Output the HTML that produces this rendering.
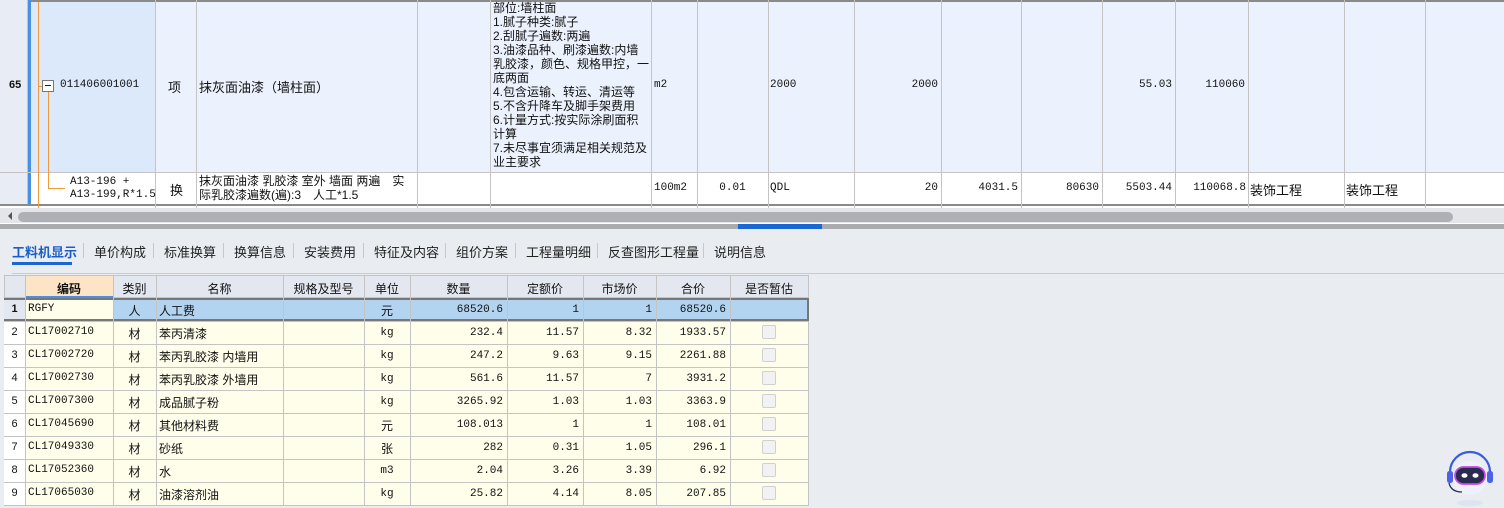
<!DOCTYPE html>
<html><head><meta charset="utf-8"><style>
*{margin:0;padding:0;box-sizing:border-box}
body{width:1504px;height:508px;overflow:hidden;background:#fff;font-family:"Liberation Sans","Noto Sans CJK SC",sans-serif;font-size:12px;color:#111;position:relative}
.a{position:absolute}
.m{font-family:"Liberation Mono","Noto Sans CJK SC",monospace;font-size:11px}
.ctr{text-align:center}
</style></head><body>
<div class="a" style="left:0;top:0;width:1504px;height:2px;background:#8a8a8a"></div>
<div class="a" style="left:0;top:0;width:28px;height:206px;background:#e8ecf5;border-right:1px solid #c4c4c4"></div>
<div class="a" style="left:28px;top:0;width:3px;height:206px;background:#4a90e2"></div>
<div class="a" style="left:31px;top:2px;width:1473px;height:170px;background:#ebf2fd"></div>
<div class="a" style="left:31px;top:2px;width:124px;height:170px;background:#dce9fb"></div>
<div class="a" style="left:0;top:172px;width:1504px;height:1px;background:#c4c4c4"></div>
<div class="a" style="left:31px;top:173px;width:1473px;height:31px;background:#fff"></div>
<div class="a" style="left:0;top:204px;width:1504px;height:2px;background:#8a8a8a"></div>
<div class="a" style="left:155px;top:0;width:1px;height:208px;background:#c4c4c4"></div>
<div class="a" style="left:196px;top:0;width:1px;height:208px;background:#c4c4c4"></div>
<div class="a" style="left:417px;top:0;width:1px;height:208px;background:#c4c4c4"></div>
<div class="a" style="left:490px;top:0;width:1px;height:208px;background:#c4c4c4"></div>
<div class="a" style="left:651px;top:0;width:1px;height:208px;background:#c4c4c4"></div>
<div class="a" style="left:697px;top:0;width:1px;height:208px;background:#c4c4c4"></div>
<div class="a" style="left:768px;top:0;width:1px;height:208px;background:#c4c4c4"></div>
<div class="a" style="left:854px;top:0;width:1px;height:208px;background:#c4c4c4"></div>
<div class="a" style="left:941px;top:0;width:1px;height:208px;background:#c4c4c4"></div>
<div class="a" style="left:1021px;top:0;width:1px;height:208px;background:#c4c4c4"></div>
<div class="a" style="left:1102px;top:0;width:1px;height:208px;background:#c4c4c4"></div>
<div class="a" style="left:1175px;top:0;width:1px;height:208px;background:#c4c4c4"></div>
<div class="a" style="left:1248px;top:0;width:1px;height:208px;background:#c4c4c4"></div>
<div class="a" style="left:1344px;top:0;width:1px;height:208px;background:#c4c4c4"></div>
<div class="a" style="left:1425px;top:0;width:1px;height:208px;background:#c4c4c4"></div>
<div class="a" style="left:38px;top:2px;width:1px;height:206px;background:#f39a3c"></div>
<div class="a" style="left:38px;top:86px;width:4px;height:1px;background:#f39a3c"></div>
<div class="a" style="left:48px;top:91px;width:1px;height:97px;background:#f39a3c"></div>
<div class="a" style="left:48px;top:188px;width:17px;height:1px;background:#f39a3c"></div>
<div class="a" style="left:42px;top:80px;width:12px;height:12px;border:1px solid #777;background:#fff"></div>
<div class="a" style="left:45px;top:85px;width:6px;height:1px;background:#222"></div>
<div class="a" style="left:9px;top:79px;font-weight:bold;font-size:11px">65</div>
<div class="a m" style="left:60px;top:79px">011406001001</div>
<div class="a" style="left:168px;top:77px;font-size:13px">项</div>
<div class="a" style="left:199px;top:77px;font-size:13px">抹灰面油漆（墙柱面）</div>
<div class="a" style="left:493px;top:1px;width:158px;font-size:12px;line-height:14px;white-space:nowrap">部位:墙柱面<br>1.腻子种类:腻子<br>2.刮腻子遍数:两遍<br>3.油漆品种、刷漆遍数:内墙<br>乳胶漆，颜色、规格甲控，一<br>底两面<br>4.包含运输、转运、清运等<br>5.不含升降车及脚手架费用<br>6.计量方式:按实际涂刷面积<br>计算<br>7.未尽事宜须满足相关规范及<br>业主要求</div>
<div class="a m" style="left:654px;top:79px">m2</div>
<div class="a m" style="left:770px;top:79px">2000</div>
<div class="a m" style="left:854px;top:79px;width:84px;text-align:right">2000</div>
<div class="a m" style="left:1102px;top:79px;width:70px;text-align:right">55.03</div>
<div class="a m" style="left:1175px;top:79px;width:70px;text-align:right">110060</div>
<div class="a m" style="left:70px;top:176px;line-height:13px">A13-196 +<br>A13-199,R*1.5</div>
<div class="a" style="left:170px;top:180px;font-size:13px">换</div>
<div class="a" style="left:199px;top:174px;font-size:12px;line-height:14px">抹灰面油漆 乳胶漆 室外 墙面 两遍　实<br>际乳胶漆遍数(遍):3　人工*1.5</div>
<div class="a m" style="left:654px;top:182px">100m2</div>
<div class="a m" style="left:697px;top:182px;width:71px;text-align:center">0.01</div>
<div class="a m" style="left:770px;top:182px">QDL</div>
<div class="a m" style="left:854px;top:182px;width:84px;text-align:right">20</div>
<div class="a m" style="left:941px;top:182px;width:77px;text-align:right">4031.5</div>
<div class="a m" style="left:1021px;top:182px;width:78px;text-align:right">80630</div>
<div class="a m" style="left:1102px;top:182px;width:70px;text-align:right">5503.44</div>
<div class="a m" style="left:1175px;top:182px;width:71px;text-align:right">110068.8</div>
<div class="a" style="left:1250px;top:180px;font-size:13px">装饰工程</div>
<div class="a" style="left:1346px;top:180px;font-size:13px">装饰工程</div>
<div class="a" style="left:0;top:208px;width:1504px;height:15px;background:#e4e5e8"></div>
<div class="a" style="left:8px;top:212px;width:0;height:0;border-top:4px solid transparent;border-bottom:4px solid transparent;border-right:4px solid #555"></div>
<div class="a" style="left:18px;top:212px;width:1435px;height:10px;background:#aeb0b5;border-radius:5px"></div>
<div class="a" style="left:0;top:224px;width:1504px;height:5px;background:#a9abae"></div>
<div class="a" style="left:738px;top:224px;width:84px;height:5px;background:#1a66d2"></div>
<div class="a" style="left:0;top:229px;width:1504px;height:279px;background:#e9edf2"></div>
<div class="a" style="left:12px;top:242px;font-size:13px;color:#1a5fc8;font-weight:bold">工料机显示</div>
<div class="a" style="left:12px;top:262px;width:60px;height:3px;background:#1a66d2"></div>
<div class="a" style="top:242px;left:0;width:800px;font-size:13px;color:#222">
<span class="a" style="left:94px">单价构成</span><span class="a" style="left:164px">标准换算</span><span class="a" style="left:234px">换算信息</span><span class="a" style="left:304px">安装费用</span><span class="a" style="left:374px">特征及内容</span><span class="a" style="left:456px">组价方案</span><span class="a" style="left:526px">工程量明细</span><span class="a" style="left:608px">反查图形工程量</span><span class="a" style="left:714px">说明信息</span></div>
<div class="a" style="left:83px;top:243px;width:1px;height:15px;background:#c8c8c8"></div>
<div class="a" style="left:153px;top:243px;width:1px;height:15px;background:#c8c8c8"></div>
<div class="a" style="left:223px;top:243px;width:1px;height:15px;background:#c8c8c8"></div>
<div class="a" style="left:293px;top:243px;width:1px;height:15px;background:#c8c8c8"></div>
<div class="a" style="left:363px;top:243px;width:1px;height:15px;background:#c8c8c8"></div>
<div class="a" style="left:445px;top:243px;width:1px;height:15px;background:#c8c8c8"></div>
<div class="a" style="left:515px;top:243px;width:1px;height:15px;background:#c8c8c8"></div>
<div class="a" style="left:597px;top:243px;width:1px;height:15px;background:#c8c8c8"></div>
<div class="a" style="left:703px;top:243px;width:1px;height:15px;background:#c8c8c8"></div>
<div class="a" style="left:12px;top:273px;width:1492px;height:1px;background:#c8ccd2"></div>
<div class="a" style="left:4px;top:275px;width:805px;height:231px;background:#fffeea;border:1px solid #c4c4c4"></div>
<div class="a" style="left:4px;top:275px;width:805px;height:23px;background:#e3e8f0;border:1px solid #c4c4c4"></div>
<div class="a" style="left:25px;top:276px;width:88px;height:22px;background:#fde4c6"></div>
<div class="a" style="left:25px;top:296px;width:88px;height:2px;background:#4a90e2"></div>
<div class="a" style="left:4px;top:298px;width:21px;height:208px;background:#fff"></div>
<div class="a" style="left:4px;top:298px;width:805px;height:23px;background:#b3d4f0;border:2px solid #777"></div>
<div class="a" style="left:26px;top:300px;width:87px;height:19px;background:#fffeea"></div>
<div class="a" style="left:4px;top:300px;width:21px;height:19px;background:#e3e8f0"></div>
<div class="a" id="g" style="left:0;top:0"></div>
<script>
var cols=[4,25,113,156,283,364,410,507,583,656,730,808];
var h='';
cols.slice(1,-1).forEach(function(x){h+='<div class="a" style="left:'+x+'px;top:275px;width:1px;height:231px;background:#c4c4c4"></div>';});
for(var i=1;i<=9;i++){h+='<div class="a" style="left:4px;top:'+(298+23*i)+'px;width:805px;height:1px;background:#c4c4c4"></div>';}
var hd=['编码','类别','名称','规格及型号','单位','数量','定额价','市场价','合价','是否暂估'];
hd.forEach(function(t,j){h+='<div class="a ctr" style="left:'+cols[j+1]+'px;top:280px;width:'+(cols[j+2]-cols[j+1])+'px;font-size:12px;'+(j==0?'font-weight:bold':'')+'">'+t+'</div>';});
var rows=[['RGFY','人','人工费','元','68520.6','1','1','68520.6'],['CL17002710','材','苯丙清漆','kg','232.4','11.57','8.32','1933.57'],['CL17002720','材','苯丙乳胶漆 内墙用','kg','247.2','9.63','9.15','2261.88'],['CL17002730','材','苯丙乳胶漆 外墙用','kg','561.6','11.57','7','3931.2'],['CL17007300','材','成品腻子粉','kg','3265.92','1.03','1.03','3363.9'],['CL17045690','材','其他材料费','元','108.013','1','1','108.01'],['CL17049330','材','砂纸','张','282','0.31','1.05','296.1'],['CL17052360','材','水','m3','2.04','3.26','3.39','6.92'],['CL17065030','材','油漆溶剂油','kg','25.82','4.14','8.05','207.85']];
rows.forEach(function(r,i){var y=298+23*i+5;
h+='<div class="a ctr" style="left:4px;top:'+y+'px;width:21px;font-size:11px;'+(i==0?'font-weight:bold':'')+'">'+(i+1)+'</div>';
h+='<div class="a m" style="left:28px;top:'+y+'px">'+r[0]+'</div>';
h+='<div class="a ctr" style="left:113px;top:'+(y-1)+'px;width:43px;font-size:12px">'+r[1]+'</div>';
h+='<div class="a" style="left:159px;top:'+(y-1)+'px;font-size:12px">'+r[2]+'</div>';
h+='<div class="a ctr '+(r[3]=='元'||r[3]=='张'?'':'m')+'" style="left:364px;top:'+(y+(r[3]=='元'||r[3]=='张'?-1:1))+'px;width:46px">'+r[3]+'</div>';
for(var k=0;k<4;k++){h+='<div class="a m" style="left:'+cols[6+k]+'px;top:'+(y+1)+'px;width:'+(cols[7+k]-cols[6+k]-4)+'px;text-align:right">'+r[4+k]+'</div>';}
if(i>0)h+='<div class="a" style="left:762px;top:'+(y-1)+'px;width:14px;height:14px;border:1px solid #d0d0d0;border-radius:2px;background:#f2f2f2"></div>';
});
document.getElementById('g').outerHTML=h;
</script>
<svg class="a" style="left:1440px;top:448px" width="60" height="60" viewBox="0 0 60 60">
<ellipse cx="30" cy="55" rx="13" ry="3" fill="#dde3f0"/>
<path d="M10 24 A20 20 0 0 1 50 24" fill="none" stroke="#3b5be0" stroke-width="2.2"/>
<circle cx="30" cy="30" r="17" fill="#eef0fb"/>
<rect x="15" y="19" width="30" height="17" rx="8.5" fill="#2a2b4f" stroke="#c04ce0" stroke-width="1.8"/>
<ellipse cx="24.5" cy="27.5" rx="3" ry="2.3" fill="#fff"/><ellipse cx="35.5" cy="27.5" rx="3" ry="2.3" fill="#fff"/>
<rect x="7" y="23" width="6" height="12" rx="2.5" fill="#4a63e8"/><rect x="47" y="23" width="6" height="12" rx="2.5" fill="#4a63e8"/>
<path d="M9 35 Q11 44 22 44" fill="none" stroke="#2a2b4f" stroke-width="1.3"/>
</svg>
</body></html>
